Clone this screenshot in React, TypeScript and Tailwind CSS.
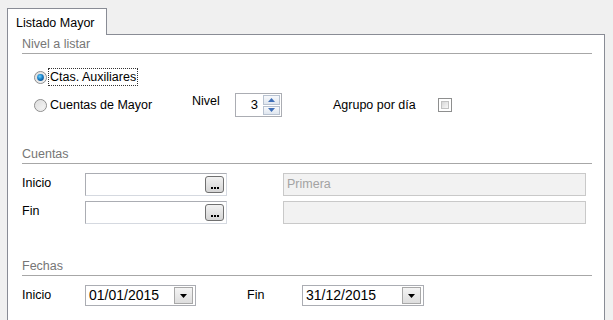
import React from 'react';

const font = { fontFamily: '"Liberation Sans", Arial, sans-serif' };

const Radio: React.FC<{ checked?: boolean }> = ({ checked = false }) => (
  <svg width="13" height="13" viewBox="0 0 13 13" className="shrink-0">
    <defs>
      <linearGradient id={checked ? 'rbg1' : 'rbg0'} x1="0" y1="0" x2="1" y2="1">
        <stop offset="0" stopColor="#d9d9d9" />
        <stop offset="1" stopColor="#fbfbfb" />
      </linearGradient>
      <radialGradient id="rdot" cx="0.4" cy="0.35" r="0.7">
        <stop offset="0" stopColor="#6fd3ff" />
        <stop offset="0.55" stopColor="#1a82c9" />
        <stop offset="1" stopColor="#0b4f8f" />
      </radialGradient>
    </defs>
    <circle cx="6.5" cy="6.5" r="6" fill={`url(#${checked ? 'rbg1' : 'rbg0'})`} stroke="#8d8d8d" strokeWidth="1" />
    <circle cx="6.5" cy="6.5" r="4.6" fill="none" stroke="#e6e6e6" strokeWidth="0.8" />
    {checked && <circle cx="6.5" cy="6.5" r="3.4" fill="url(#rdot)" />}
  </svg>
);

const Checkbox = () => (
  <div className="w-[14px] h-[14px] border border-[#8e8f8f] bg-white p-[2px] shrink-0">
    <div className="w-full h-full bg-gradient-to-br from-[#d8d8d8] to-[#f8f8f8] border border-[#c2c2c2]" />
  </div>
);

const GroupHeader: React.FC<{ label: string; className?: string }> = ({ label, className = '' }) => (
  <div className={`h-[19px] border-b border-[#a7a7a7] mr-[12px] flex items-center text-[#767676] ${className}`}>
    {label}
  </div>
);

const DotsButton = () => (
  <div className="w-[19px] h-[17px] mt-[2px] mr-[2px] rounded-[3px] border border-[#707070] bg-gradient-to-b from-[#f2f2f2] to-[#d5d5d5] flex items-end justify-center pb-[3px]">
    <div className="flex gap-[1px]">
      <span className="w-[2px] h-[2px] bg-black" />
      <span className="w-[2px] h-[2px] bg-black" />
      <span className="w-[2px] h-[2px] bg-black" />
    </div>
  </div>
);

const TextInput = () => (
  <div className="w-[142px] h-[23px] border border-[#abadb3] border-b-[#d5d9e0] border-r-[#d5d9e0] bg-white flex justify-end items-start">
    <DotsButton />
  </div>
);

const DisabledInput: React.FC<{ value?: string }> = ({ value }) => (
  <div className="w-[303px] h-[23px] border border-[#c9c9c9] bg-[#f2f2f2] flex items-center px-[3px] text-[#a3a3a3]">
    {value}
  </div>
);

const DateCombo: React.FC<{ value: string; width: string }> = ({ value, width }) => (
  <div className={`${width} h-[21px] border border-[#abadb3] bg-white flex items-center justify-between pl-[3px] pr-[2px] text-black`}>
    <span className="text-[14px]">{value}</span>
    <div className="w-[19px] h-[17px] border border-[#a8a8a8] bg-gradient-to-b from-[#f4f4f4] to-[#dedede] flex items-center justify-center">
      <svg width="7" height="4" viewBox="0 0 7 4">
        <path d="M0 0 H7 L3.5 4 Z" fill="#000" />
      </svg>
    </div>
  </div>
);

const Spinner = () => (
  <div className="w-[47px] h-[24px] border border-[#abadb3] bg-white flex items-center">
    <span className="flex-1 text-right pr-[5px] text-[13px]">3</span>
    <div className="w-[17px] h-[20px] mr-[1px] flex flex-col gap-[1px]">
      <div className="flex-1 border border-[#b8c2d0] bg-gradient-to-b from-[#f7f9fc] to-[#dfe6ef] flex items-center justify-center">
        <svg width="7" height="4" viewBox="0 0 7 4"><path d="M3.5 0 L7 4 H0 Z" fill="#3f6fb8" /></svg>
      </div>
      <div className="flex-1 border border-[#b8c2d0] bg-gradient-to-b from-[#f7f9fc] to-[#dfe6ef] flex items-center justify-center">
        <svg width="7" height="4" viewBox="0 0 7 4"><path d="M0 0 H7 L3.5 4 Z" fill="#3f6fb8" /></svg>
      </div>
    </div>
  </div>
);

export default function App() {
  return (
    <div className="w-[613px] h-[320px] overflow-hidden bg-[#f0f0f0] text-[12.5px] text-black pt-[7px] pl-[7px] pr-[8px]" style={font}>
      <div className="flex items-end">
        <div className="w-[100px] h-[27px] border border-b-0 border-[#898c95] bg-white px-[8px] pt-[5px] relative top-[1px] z-10">
          Listado Mayor
        </div>
      </div>
      <div className="h-[400px] border border-[#898c95] bg-white pl-[14px] pr-[0px]">
        <GroupHeader label="Nivel a listar" />

        <div className="mt-[13px] h-[20px] pl-[12px] flex items-center">
          <Radio checked />
          <span className="ml-[1px] px-[1px] h-[18px] flex items-center border border-dotted border-[#333]">
            Ctas. Auxiliares
          </span>
        </div>

        <div className="mt-[6px] h-[24px] pl-[12px] flex items-center">
          <div className="w-[158px] flex items-center">
            <Radio />
            <span className="ml-[3px]">Cuentas de Mayor</span>
          </div>
          <span className="w-[43px] -mt-[8px]">Nivel</span>
          <Spinner />
          <span className="ml-[51px] w-[105px]">Agrupo por día</span>
          <Checkbox />
        </div>

        <GroupHeader label="Cuentas" className="mt-[28px]" />

        <div className="mt-[9px] flex flex-col gap-[5px]">
          <div className="flex items-start">
            <span className="w-[63px] pt-[1px]">Inicio</span>
            <TextInput />
            <div className="ml-[56px]">
              <DisabledInput value="Primera" />
            </div>
          </div>
          <div className="flex items-start">
            <span className="w-[63px] pt-[1px]">Fin</span>
            <TextInput />
            <div className="ml-[56px]">
              <DisabledInput />
            </div>
          </div>
        </div>

        <GroupHeader label="Fechas" className="mt-[33px]" />

        <div className="mt-[9px] flex items-center">
          <span className="w-[63px]">Inicio</span>
          <DateCombo value="01/01/2015" width="w-[111px]" />
          <span className="ml-[51px] w-[55px]">Fin</span>
          <DateCombo value="31/12/2015" width="w-[122px]" />
        </div>
      </div>
    </div>
  );
}
